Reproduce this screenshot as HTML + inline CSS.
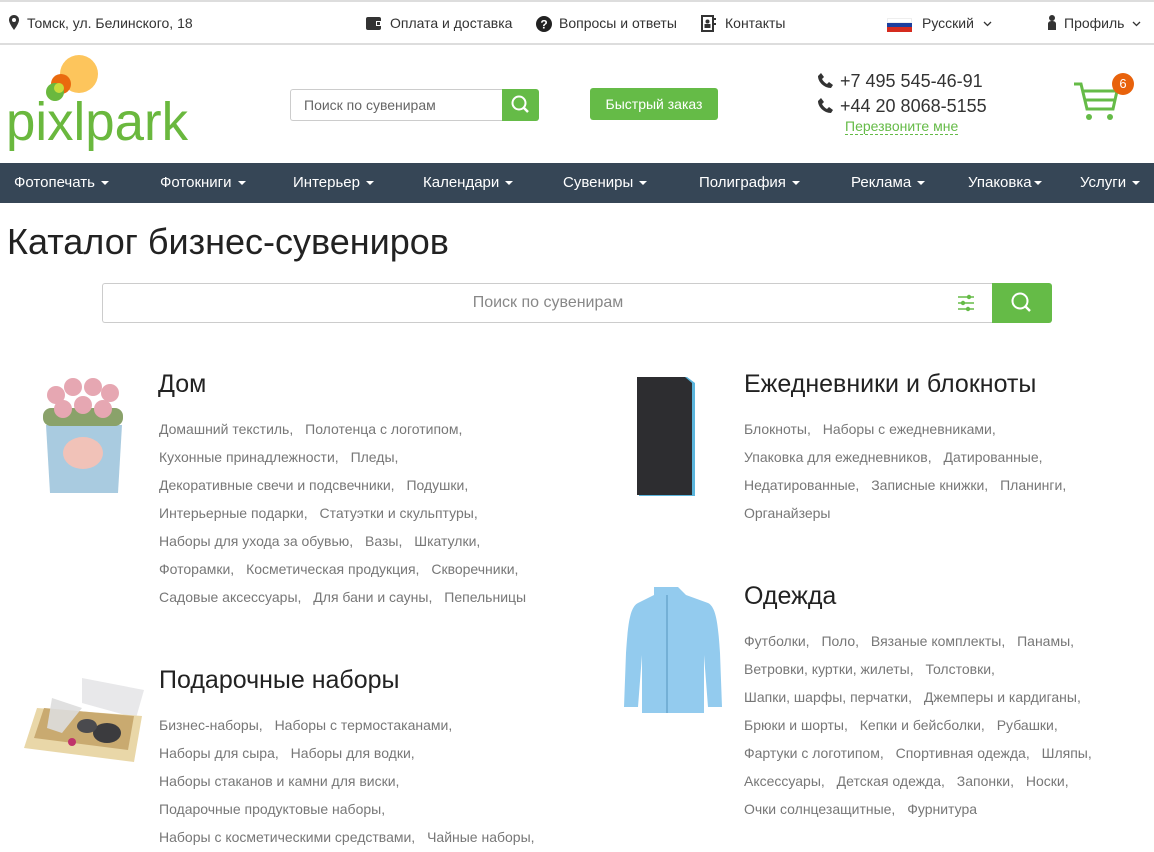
<!DOCTYPE html>
<html><head><meta charset="utf-8"><style>
*{margin:0;padding:0;box-sizing:border-box}
body{width:1154px;height:852px;overflow:hidden;background:#fff;font-family:"Liberation Sans",Arial,sans-serif;color:#333;position:relative}
.a{position:absolute;white-space:nowrap}
.top{position:absolute;left:0;top:0;width:1154px;height:45px;border-top:2px solid #ddd;border-bottom:2px solid #ddd;font-size:14px;color:#333}
.nav{position:absolute;left:0;top:163px;width:1154px;height:40px;background:#364656;color:#fff;font-size:15px}
.nav span{position:absolute;top:11px}
.tri{display:inline-block;width:0;height:0;border-left:4px solid transparent;border-right:4px solid transparent;border-top:4px solid #fff;vertical-align:middle;margin-left:6px}
h2{position:absolute;font-weight:normal;font-size:25px;color:#222;white-space:nowrap}
.l{position:absolute;font-size:14px;line-height:28px;color:#777;white-space:nowrap}
.l span{margin-right:8px}
</style></head><body>
<div class="top">
 <svg class="a" style="left:9px;top:13px" width="10" height="15" viewBox="0 0 10 15"><path d="M5 0C2 0 0 2.2 0 5c0 3.5 5 10 5 10s5-6.5 5-10C10 2.2 8 0 5 0z" fill="#333"/><circle cx="5" cy="5" r="2" fill="#fff"/></svg>
 <span class="a" style="left:27px;top:13px">Томск, ул. Белинского, 18</span>
 <svg class="a" style="left:366px;top:13px" width="17" height="15"><rect x="0" y="2" width="15" height="13" rx="2" fill="#333"/><rect x="10" y="6" width="6" height="5" fill="#fff"/><rect x="11" y="7" width="3" height="3" fill="#333"/></svg>
 <span class="a" style="left:390px;top:13px">Оплата и доставка</span>
 <svg class="a" style="left:536px;top:14px" width="16" height="16"><circle cx="8" cy="8" r="8" fill="#222"/><text x="8" y="12.5" font-size="12" font-weight="bold" fill="#fff" text-anchor="middle" font-family="Liberation Sans">?</text></svg>
 <span class="a" style="left:559px;top:13px">Вопросы и ответы</span>
 <svg class="a" style="left:700px;top:13px" width="16" height="17"><rect x="1" y="0" width="13" height="17" fill="#333"/><rect x="3" y="2" width="9" height="13" fill="#fff"/><circle cx="7.5" cy="6.5" r="2" fill="#333"/><rect x="4.5" y="9" width="6" height="4" fill="#333"/><rect x="14" y="3" width="2" height="2" fill="#333"/><rect x="14" y="8" width="2" height="2" fill="#333"/></svg>
 <span class="a" style="left:725px;top:13px">Контакты</span>
 <div class="a" style="left:887px;top:16px;width:25px;height:14px"><div style="height:4.7px;background:#fff;border:1px solid #eee"></div><div style="height:4.7px;background:#1c3f9e"></div><div style="height:4.7px;background:#d52b1e"></div></div>
 <span class="a" style="left:922px;top:13px">Русский</span>
 <svg class="a" style="left:983px;top:19px" width="9" height="6"><path d="M1 1l3.5 3.5L8 1" stroke="#333" stroke-width="1.3" fill="none"/></svg>
 <svg class="a" style="left:1047px;top:13px" width="10" height="16"><circle cx="5" cy="3" r="3" fill="#333"/><path d="M1 15V9c0-2 1.5-3 4-3s4 1 4 3v6z" fill="#333"/></svg>
 <span class="a" style="left:1064px;top:13px">Профиль</span>
 <svg class="a" style="left:1132px;top:19px" width="9" height="6"><path d="M1 1l3.5 3.5L8 1" stroke="#333" stroke-width="1.3" fill="none"/></svg>
</div>
<!-- logo -->
<svg class="a" style="left:5px;top:54px" width="185" height="100" viewBox="0 0 185 100">
 <circle cx="74" cy="20" r="19" fill="#fdc55c"/>
 <circle cx="56" cy="30" r="10" fill="#ea6a0e"/>
 <circle cx="50" cy="38" r="9" fill="#6ab83e"/>
 <circle cx="54" cy="34" r="5" fill="#c8dc3a"/>
 <text x="1" y="86" font-family="Liberation Sans" font-size="54" fill="#6ab83e" textLength="182" lengthAdjust="spacingAndGlyphs">pixlpark</text>
</svg>
<div class="a" style="left:290px;top:89px;width:212px;height:32px;border:1px solid #ccc;border-right:none;border-radius:3px 0 0 3px;font-size:14px;color:#666;padding:7px 13px">Поиск по сувенирам</div>
<div class="a" style="left:502px;top:89px;width:37px;height:32px;background:#65bb47;border-radius:0 3px 3px 0"><svg width="37" height="32"><circle cx="17" cy="14" r="6.5" stroke="#fff" stroke-width="2" fill="none"/><line x1="22" y1="19" x2="26" y2="23" stroke="#fff" stroke-width="2.5"/></svg></div>
<div class="a" style="left:590px;top:88px;width:128px;height:32px;background:#65bb47;border-radius:3px;color:#fff;font-size:14px;text-align:center;line-height:32px">Быстрый заказ</div>
<svg class="a" style="left:818px;top:73px" width="15" height="15" viewBox="0 0 15 15"><path d="M3 0l3 4-2 2c1 2 3 4 5 5l2-2 4 3-2 3C6 15 0 9 0 3z" fill="#333"/></svg>
<span class="a" style="left:840px;top:71px;font-size:18px;color:#333">+7 495 545-46-91</span>
<svg class="a" style="left:818px;top:98px" width="15" height="15" viewBox="0 0 15 15"><path d="M3 0l3 4-2 2c1 2 3 4 5 5l2-2 4 3-2 3C6 15 0 9 0 3z" fill="#333"/></svg>
<span class="a" style="left:840px;top:96px;font-size:18px;color:#333">+44 20 8068-5155</span>
<span class="a" style="left:845px;top:119px;font-size:14px;color:#65bb47;border-bottom:1px dashed #65bb47;line-height:15px">Перезвоните мне</span>
<svg class="a" style="left:1072px;top:80px" width="48" height="42" viewBox="0 0 48 42"><path d="M2 4h7l6 25h26l4-18H12" stroke="#65bb47" stroke-width="3" fill="none"/><line x1="14" y1="20" x2="43" y2="20" stroke="#65bb47" stroke-width="3"/><circle cx="17" cy="37" r="3" fill="#65bb47"/><circle cx="38" cy="37" r="3" fill="#65bb47"/></svg>
<div class="a" style="left:1112px;top:73px;width:22px;height:22px;border-radius:50%;background:#e8620c;color:#fff;font-size:13px;text-align:center;line-height:22px">6</div>
<div class="nav">
 <span style="left:14px">Фотопечать<i class="tri"></i></span>
 <span style="left:160px">Фотокниги<i class="tri"></i></span>
 <span style="left:293px">Интерьер<i class="tri"></i></span>
 <span style="left:423px">Календари<i class="tri"></i></span>
 <span style="left:563px">Сувениры<i class="tri"></i></span>
 <span style="left:699px">Полиграфия<i class="tri"></i></span>
 <span style="left:851px">Реклама<i class="tri"></i></span>
 <span style="left:968px">Упаковка<i class="tri" style="margin-left:2px"></i></span>
 <span style="left:1080px">Услуги<i class="tri"></i></span>
</div>
<h2 style="left:7px;top:221px;font-size:36px">Каталог бизнес-сувениров</h2>
<div class="a" style="left:102px;top:283px;width:891px;height:40px;border:1px solid #ccc;border-right:none;border-radius:3px 0 0 3px;font-size:16px;color:#888;text-align:center;line-height:38px">Поиск по сувенирам</div>
<svg class="a" style="left:957px;top:294px" width="18" height="18"><g stroke="#65bb47" stroke-width="1.5"><line x1="1" y1="3" x2="17" y2="3"/><line x1="1" y1="9" x2="17" y2="9"/><line x1="1" y1="15" x2="17" y2="15"/></g><g fill="#65bb47"><circle cx="12" cy="3" r="2.2"/><circle cx="6" cy="9" r="2.2"/><circle cx="11" cy="15" r="2.2"/></g></svg>
<div class="a" style="left:992px;top:283px;width:60px;height:40px;background:#65bb47;border-radius:0 3px 3px 0"><svg width="60" height="40"><circle cx="28" cy="18" r="7.5" stroke="#fff" stroke-width="2" fill="none"/><line x1="33.5" y1="23.5" x2="38" y2="28" stroke="#fff" stroke-width="2.5"/></svg></div>

<svg class="a" style="left:38px;top:373px" width="90" height="125"><path d="M8 52h76l-4 68H12z" fill="#a9cbe0"/><ellipse cx="45" cy="80" rx="20" ry="16" fill="#f1c2b8"/><rect x="5" y="35" width="80" height="18" rx="8" fill="#8aa26a"/><g fill="#e6a7b2"><circle cx="18" cy="22" r="9"/><circle cx="35" cy="14" r="9"/><circle cx="55" cy="14" r="9"/><circle cx="72" cy="20" r="9"/><circle cx="25" cy="36" r="9"/><circle cx="45" cy="32" r="9"/><circle cx="65" cy="36" r="9"/></g></svg>
<h2 style="left:158px;top:370px">Дом</h2>
<div class="l" style="left:159px;top:415px">
<div><span>Домашний текстиль,</span> <span>Полотенца с логотипом,</span></div>
<div><span>Кухонные принадлежности,</span> <span>Пледы,</span></div>
<div><span>Декоративные свечи и подсвечники,</span> <span>Подушки,</span></div>
<div><span>Интерьерные подарки,</span> <span>Статуэтки и скульптуры,</span></div>
<div><span>Наборы для ухода за обувью,</span> <span>Вазы,</span> <span>Шкатулки,</span></div>
<div><span>Фоторамки,</span> <span>Косметическая продукция,</span> <span>Скворечники,</span></div>
<div><span>Садовые аксессуары,</span> <span>Для бани и сауны,</span> <span>Пепельницы</span></div>
</div>

<svg class="a" style="left:22px;top:678px" width="122" height="84"><path d="M60 0l62 12-8 28L60 25z" fill="#e8e8ea"/><path d="M15 30l105 8-8 46L2 70z" fill="#e9d7a8"/><path d="M22 30l90 8-6 34L12 60z" fill="#c9aa70"/><ellipse cx="85" cy="55" rx="14" ry="10" fill="#3b3b3e"/><ellipse cx="65" cy="48" rx="10" ry="7" fill="#4a4a4e"/><path d="M30 20l30 10-20 25-15-5z" fill="#ddd" opacity=".9"/><circle cx="50" cy="64" r="4" fill="#c0336b"/></svg>
<h2 style="left:159px;top:666px">Подарочные наборы</h2>
<div class="l" style="left:159px;top:711px">
<div><span>Бизнес-наборы,</span> <span>Наборы с термостаканами,</span></div>
<div><span>Наборы для сыра,</span> <span>Наборы для водки,</span></div>
<div><span>Наборы стаканов и камни для виски,</span></div>
<div><span>Подарочные продуктовые наборы,</span></div>
<div><span>Наборы с косметическими средствами,</span> <span>Чайные наборы,</span></div>
</div>

<svg class="a" style="left:635px;top:377px" width="64" height="120"><path d="M4 0h48l8 6v113H4z" fill="#5bb5dc"/><path d="M2 0h48l7 6v112H2z" fill="#2d2d30"/></svg>
<h2 style="left:744px;top:370px">Ежедневники и блокноты</h2>
<div class="l" style="left:744px;top:415px">
<div><span>Блокноты,</span> <span>Наборы с ежедневниками,</span></div>
<div><span>Упаковка для ежедневников,</span> <span>Датированные,</span></div>
<div><span>Недатированные,</span> <span>Записные книжки,</span> <span>Планинги,</span></div>
<div><span>Органайзеры</span></div>
</div>

<svg class="a" style="left:612px;top:585px" width="110" height="128"><path d="M42 2h24l8 8 22 8c8 4 10 20 12 50l2 54h-14l-4-52v60H30V70l-4 52H12l2-54c2-30 4-46 12-50l16-8z" fill="#93cbee"/><line x1="55" y1="10" x2="55" y2="128" stroke="#6aa7cf" stroke-width="1.5"/></svg>
<h2 style="left:744px;top:582px">Одежда</h2>
<div class="l" style="left:744px;top:627px">
<div><span>Футболки,</span> <span>Поло,</span> <span>Вязаные комплекты,</span> <span>Панамы,</span></div>
<div><span>Ветровки, куртки, жилеты,</span> <span>Толстовки,</span></div>
<div><span>Шапки, шарфы, перчатки,</span> <span>Джемперы и кардиганы,</span></div>
<div><span>Брюки и шорты,</span> <span>Кепки и бейсболки,</span> <span>Рубашки,</span></div>
<div><span>Фартуки с логотипом,</span> <span>Спортивная одежда,</span> <span>Шляпы,</span></div>
<div><span>Аксессуары,</span> <span>Детская одежда,</span> <span>Запонки,</span> <span>Носки,</span></div>
<div><span>Очки солнцезащитные,</span> <span>Фурнитура</span></div>
</div>
</body></html>
